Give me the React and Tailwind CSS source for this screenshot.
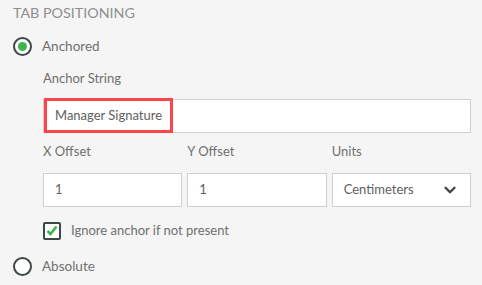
import { ChevronDown } from 'lucide-react'

function Radio({ checked, label }) {
  return (
    <label className="flex items-center gap-[10px] h-[20px]">
      <span className="flex items-center justify-center w-[19px] h-[19px] rounded-full border-[2.5px] border-[#3f4749] bg-white">
        {checked && <span className="w-[9px] h-[9px] rounded-full bg-[#3db54a]" />}
      </span>
      <span className="text-[13.5px] text-[#707070]">{label}</span>
    </label>
  )
}

function Field({ value, children }) {
  return (
    <div className="flex items-center h-[34px] bg-white border border-[#cfcfcf] px-[11px] text-[13px] text-[#606060]">
      {value}
      {children}
    </div>
  )
}

export default function App() {
  return (
    <div
      className="w-[482px] h-[285px] bg-[#f5f5f5] overflow-hidden pl-[13px] pt-[2px]"
      style={{ fontFamily: 'Lato, sans-serif' }}
    >
      <h2 className="text-[14.3px] leading-[22px] text-[#8f8f8f]">TAB POSITIONING</h2>

      <div className="mt-[12px]">
        <Radio checked label="Anchored" />
      </div>

      <div className="pl-[30px] pr-[11px]">
        <p className="mt-[13px] text-[13px] leading-[18px] text-[#707070]">Anchor String</p>
        <div className="relative mt-[12px]">
          <Field value="Manager Signature" />
          <div className="absolute left-[1px] top-[-1px] w-[129px] h-[35px] border-[3px] border-[#ff4449]" />
        </div>

        <div className="grid grid-cols-3 gap-[5px] mt-[9px]">
          <div>
            <p className="text-[13px] leading-[18px] text-[#707070]">X Offset</p>
            <div className="mt-[13px]"><Field value="1" /></div>
          </div>
          <div>
            <p className="text-[13px] leading-[18px] text-[#707070]">Y Offset</p>
            <div className="mt-[13px]"><Field value="1" /></div>
          </div>
          <div>
            <p className="text-[13px] leading-[18px] text-[#707070]">Units</p>
            <div className="mt-[13px]">
              <Field>
                <span className="flex-1">Centimeters</span>
                <ChevronDown size={18} strokeWidth={3.2} className="text-[#3f4749]" />
              </Field>
            </div>
          </div>
        </div>

        <label className="flex items-center gap-[10px] mt-[14px]">
          <span className="flex items-center justify-center w-[18px] h-[18px] rounded-[2px] border-2 border-[#3f4749] bg-white">
            <svg width="12" height="11" viewBox="0 0 12 11">
              <path d="M1.5 6 L4.5 9 L10.5 1.5" fill="none" stroke="#3db54a" strokeWidth="2.6" />
            </svg>
          </span>
          <span className="text-[13px] text-[#707070]">Ignore anchor if not present</span>
        </label>
      </div>

      <div className="mt-[16px]">
        <Radio label="Absolute" />
      </div>
    </div>
  )
}
